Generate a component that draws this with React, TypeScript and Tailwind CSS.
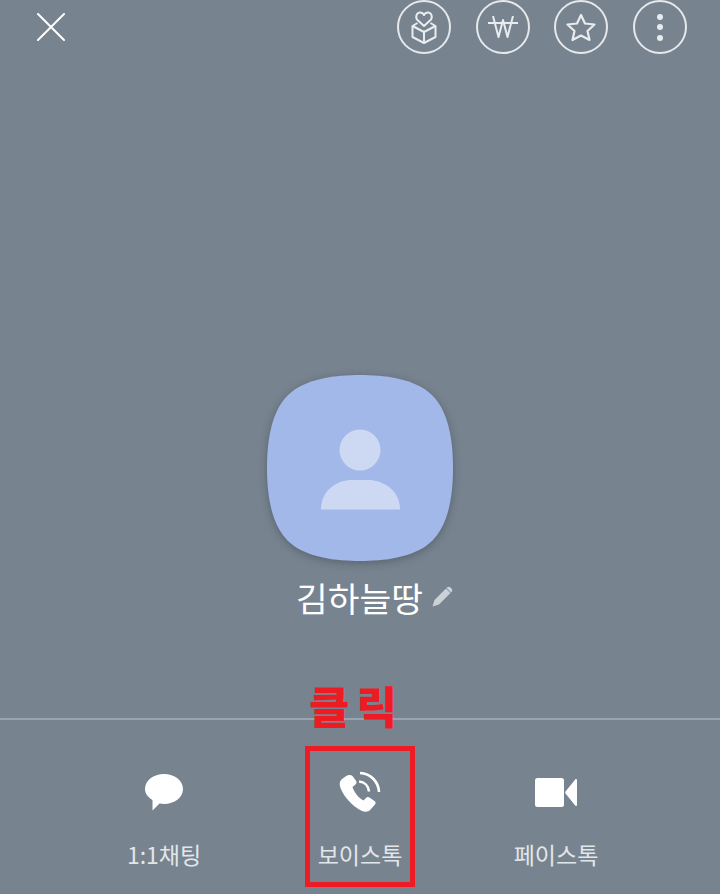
// 프로필 화면 — 보이스톡 안내 캡처
import { type ReactNode } from 'react';

function CircleButton({ children }: { children: ReactNode }) {
  return (
    <button className="flex h-[54px] w-[54px] items-center justify-center rounded-full border-2 border-[#e6e9ec]">
      {children}
    </button>
  );
}

function Squircle() {
  return (
    <svg width="186" height="186" viewBox="0 0 186 186" className="overflow-visible drop-shadow-[0_2px_4px_rgba(50,60,75,0.45)]">
      <path
        d="M93 0C116 0 148 3 165.500 20.500C183 38 186 70 186 93C186 116 183 148 165.500 165.500C148 183 116 186 93 186C70 186 38 183 20.500 165.500C3 148 0 116 0 93C0 70 3 38 20.500 20.500C38 3 70 0 93 0Z"
        fill="#a2b8e9"
      />
      <circle cx="93" cy="75" r="20.5" fill="#cdd9f3" />
      <path d="M54 134.500C54 115 70 105 85 105H101C116 105 133 115 133 134.500Z" fill="#cdd9f3" />
    </svg>
  );
}

function NavItem({ label, icon, active = false }: { label: string; icon: ReactNode; active?: boolean }) {
  return (
    <div className="flex w-[196px] justify-center">
      <div className={`flex h-[141px] w-[110px] flex-col items-center border-[5px] ${active ? 'border-[#ed1c24]' : 'border-transparent'}`}>
        <div className="mt-[16px] flex h-[50px] w-[50px] items-center justify-center">{icon}</div>
        <span className="mt-[20px] whitespace-nowrap text-[23px] leading-[34px] text-[#e3e6e9]">{label}</span>
      </div>
    </div>
  );
}

export default function App() {
  return (
    <div className="relative flex h-[894px] w-[720px] flex-col overflow-hidden bg-[#77838f] font-['Noto_Sans_CJK_KR','Noto_Sans',sans-serif]">
      {/* 상단 버튼 */}
      <div className="flex h-[54px] items-center justify-between pl-[37px] pr-[33px]">
        <svg width="28" height="28" viewBox="0 0 28 28" stroke="#fff" strokeWidth="2" strokeLinecap="round">
          <path d="M1 1L27 27M27 1L1 27" />
        </svg>
        <div className="flex gap-[24.670px]">
          <CircleButton>
            <svg width="26" height="33" viewBox="0 0 26 33" fill="none" stroke="#e9ecef" strokeWidth="2" strokeLinejoin="round">
              <path d="M13 15L6.500 9C4 6.500 5.500 1.500 9 1.500C11 1.500 12.300 2.500 13 4C13.700 2.500 15 1.500 17 1.500C20.500 1.500 22 6.500 19.500 9Z" />
              <path d="M6.500 12L1.500 15V26L13 32L24.500 26V15L19.500 12" />
              <path d="M1.500 15L13 21L24.500 15M13 21V32" />
            </svg>
          </CircleButton>
          <CircleButton>
            <svg width="30" height="22" viewBox="0 0 30 22" fill="none" stroke="#e9ecef" strokeWidth="2" strokeLinejoin="round">
              <path d="M5 0L10.500 21L15 4L19.500 21L25 0" />
              <path d="M0 7H30" />
            </svg>
          </CircleButton>
          <CircleButton>
            <svg width="30" height="29" viewBox="0 0 30 29" fill="none" stroke="#e9ecef" strokeWidth="2.200" strokeLinejoin="round">
              <path d="M15 2L19 10.500L28.500 11.500L21.500 18L23.500 27L15 22.500L6.500 27L8.500 18L1.500 11.500L11 10.500Z" />
            </svg>
          </CircleButton>
          <CircleButton>
            <div className="flex flex-col gap-[4.500px]">
              <span className="h-[6px] w-[6px] rounded-full bg-[#e9ecef]" />
              <span className="h-[6px] w-[6px] rounded-full bg-[#e9ecef]" />
              <span className="h-[6px] w-[6px] rounded-full bg-[#e9ecef]" />
            </div>
          </CircleButton>
        </div>
      </div>

      {/* 프로필 */}
      <div className="mt-[321px] flex flex-col items-center">
        <Squircle />
        <div className="mt-[11px] flex h-[50px] items-center pl-[29px]">
          <span className="text-[34.500px] leading-[50px] text-white">김하늘땅</span>
          <svg width="22" height="22" viewBox="0 0 22 22" className="ml-[8px]">
            <path d="M15 2.500L19.500 7L8 18.500L1.500 20.500L3.500 14Z" fill="#ccd1d6" />
            <path d="M16 1.500C17 .5 18.500 .5 19.500 1.500L20.500 2.500C21.500 3.500 21.500 5 20.500 6L20 6.500L15.500 2Z" fill="#ccd1d6" />
          </svg>
        </div>
      </div>

      {/* 하단 메뉴 */}
      <div className="mt-[96px] flex flex-1 justify-center border-t-2 border-[#9aa4ae] pt-[26px]">
        <NavItem
          label="1:1채팅"
          icon={
            <svg width="38" height="37" viewBox="0 0 38 37" fill="#fff">
              <path d="M19 0C29.500 0 38 6.500 38 15C38 23.500 29.500 30 19 30C17.500 30 16 29.800 14.500 29.500L7.500 36.500L7.500 26C3 23.500 0 19.500 0 15C0 6.500 8.500 0 19 0Z" />
            </svg>
          }
        />
        <NavItem
          active
          label="보이스톡"
          icon={
            <svg width="42" height="42" viewBox="0 0 42 42" fill="none">
              <path
                d="M6.500 5.500L3 8C.5 10 0 13 1.500 17C4.500 25 13 35 22 39.500C26 41.500 29.500 41 31.500 38.500L36 33.500C37 32.300 36.800 31 35.500 30L30.500 26.500C29.300 25.700 28 25.800 27 27L24.500 29.500C20 27.500 15 21 13.500 16L16.500 13.500C17.700 12.500 17.800 11 17 9.700L13.500 5C12 3.500 8.500 3.800 6.500 5.500Z"
                fill="#fff"
              />
              <path d="M20 10.500C25.500 11 29.500 15 30 20.500" stroke="#fff" strokeWidth="2.600" />
              <path d="M21 2C31.500 2.500 39.500 10.500 40 21" stroke="#fff" strokeWidth="2.600" />
            </svg>
          }
        />
        <NavItem
          label="페이스톡"
          icon={
            <svg width="42" height="29" viewBox="0 0 42 29" fill="#fff">
              <rect x="0" y="0" width="29" height="29" rx="2.500" />
              <path d="M41 1C41.500 1 42 1.500 42 2V27C42 27.500 41.500 28 41 28C40.700 28 40.400 27.800 40.200 27.600L30.500 15.500C30 15 30 14 30.500 13.500L40.200 1.400C40.400 1.200 40.700 1 41 1Z" />
            </svg>
          }
        />
      </div>

      {/* 빨간 안내 문구 */}
      <span className="absolute left-[309px] top-[670px] text-[44px] font-black leading-[70px] tracking-[7px] text-[#ed1c24]">클릭</span>
    </div>
  );
}
